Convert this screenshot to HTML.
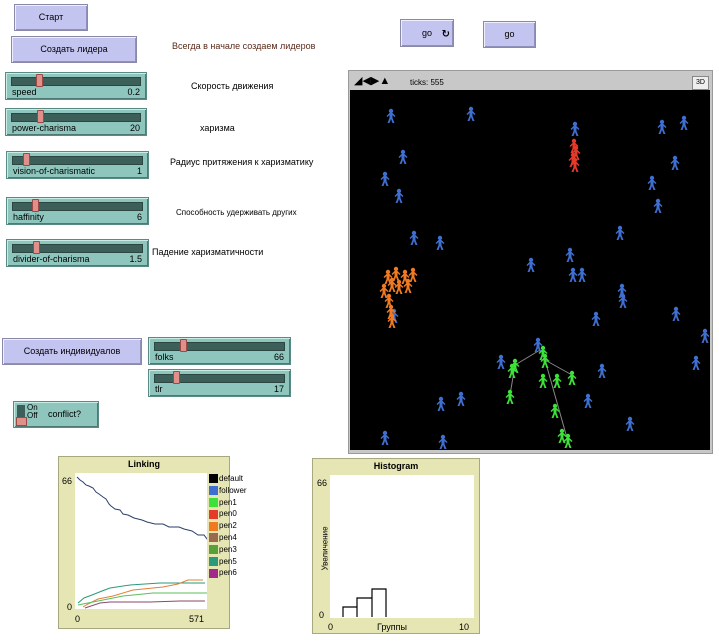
<!DOCTYPE html>
<html><head><meta charset="utf-8"><style>
body{margin:0;width:719px;height:642px;background:#fff;position:relative;overflow:hidden;font-family:"Liberation Sans","DejaVu Sans",sans-serif;font-size:9px;color:#000}
.a{position:absolute}
.btn{position:absolute;background:#c4c4f0;border:1px solid #8a8aa8;box-shadow:inset 1px 1px 0 #eef,inset -1px -1px 0 #9090b8;text-align:center;font-size:9px}
.sl{position:absolute;background:#8ec6be;border:1px solid #5a8a84;box-shadow:inset 1px 1px 0 #c8ece6,inset -1px -1px 0 #4f7a74}
.tr{position:absolute;left:5px;right:5px;top:4px;height:7px;background:#3d5f5a;border:1px solid #2c4642}
.kn{position:absolute;top:1px;width:5px;height:11px;background:#e08f8a;border:1px solid #9a4a46;border-radius:1px}
.ln{position:absolute;left:6px;bottom:2px;font-size:9px}
.vl{position:absolute;right:6px;bottom:2px;font-size:9px}
.lab{position:absolute;font-size:9px}
.plot{position:absolute;background:#e6e6b4;border:1px solid #a8a880}
.lg{white-space:nowrap;height:11.8px}
.lg span{display:inline-block;width:9px;height:9px;vertical-align:middle;margin-right:1px}
</style></head><body>
<div class="btn" style="left:14px;top:4px;width:72px;height:25px;line-height:25px">Старт</div>
<div class="btn" style="left:11px;top:36px;width:124px;height:25px;line-height:25px">Создать лидера</div>
<div class="lab" style="left:172px;top:41px;color:#5a2a1a">Всегда в начале создаем лидеров</div>

<div class="sl" style="left:5px;top:72px;width:140px;height:26px"><div class="tr"></div><div class="kn" style="left:30px"></div><span class="ln">speed</span><span class="vl">0.2</span></div>
<div class="lab" style="left:191px;top:81px">Скорость движения</div>
<div class="sl" style="left:5px;top:108px;width:140px;height:26px"><div class="tr"></div><div class="kn" style="left:31px"></div><span class="ln">power-charisma</span><span class="vl">20</span></div>
<div class="lab" style="left:200px;top:123px">харизма</div>
<div class="sl" style="left:6px;top:151px;width:141px;height:26px"><div class="tr"></div><div class="kn" style="left:16px"></div><span class="ln">vision-of-charismatic</span><span class="vl">1</span></div>
<div class="lab" style="left:170px;top:157px">Радиус притяжения к харизматику</div>
<div class="sl" style="left:6px;top:197px;width:141px;height:26px"><div class="tr"></div><div class="kn" style="left:25px"></div><span class="ln">haffinity</span><span class="vl">6</span></div>
<div class="lab" style="left:176px;top:208px;font-size:8px">Способность удерживать других</div>
<div class="sl" style="left:6px;top:239px;width:141px;height:26px"><div class="tr"></div><div class="kn" style="left:26px"></div><span class="ln">divider-of-charisma</span><span class="vl">1.5</span></div>
<div class="lab" style="left:152px;top:247px">Падение харизматичности</div>

<div class="btn" style="left:2px;top:338px;width:138px;height:25px;line-height:25px">Создать индивидуалов</div>
<div class="sl" style="left:148px;top:337px;width:141px;height:26px"><div class="tr"></div><div class="kn" style="left:31px"></div><span class="ln">folks</span><span class="vl">66</span></div>
<div class="sl" style="left:148px;top:369px;width:141px;height:26px"><div class="tr"></div><div class="kn" style="left:24px"></div><span class="ln">tlr</span><span class="vl">17</span></div>
<div class="sl" style="left:13px;top:401px;width:84px;height:25px">
<div class="a" style="left:3px;top:3px;width:8px;height:19px;background:#3d5f5a"></div>
<div class="a" style="left:2px;top:15px;width:9px;height:7px;background:#e08f8a;border:1px solid #9a4a46"></div>
<div class="a" style="left:13px;top:2px;font-size:8px;line-height:8px">On<br>Off</div>
<div class="a" style="left:34px;top:7px">conflict?</div></div>

<div class="btn" style="left:400px;top:19px;width:52px;height:26px;line-height:26px">go<span style="position:absolute;right:3px;top:2px;font-weight:bold;font-size:10px">&#8635;</span></div>
<div class="btn" style="left:483px;top:21px;width:51px;height:25px;line-height:25px">go</div>

<div class="a" style="left:348px;top:70px;width:363px;height:382px;background:#c8c8c8;border:1px solid #999"></div>
<div class="a" style="left:354px;top:76px;font-size:11px;line-height:11px;font-weight:bold">&#9698;&#9664;&#9654;&#9650;</div>
<div class="a" style="left:410px;top:78px;font-size:8px">ticks: 555</div>
<div class="a" style="left:692px;top:76px;width:15px;height:12px;background:#eee;border:1px solid #888;font-size:7px;text-align:center;line-height:12px">3D</div>
<svg class="a" style="left:350px;top:90px" width="360" height="360" viewBox="350 90 360 360">
<defs><g id="p"><circle cx="0" cy="-4" r="2.2"/><path d="M-1.5-2h3l3 3-1 1-2-2v3l2 5h-2l-1.5-4-1.5 4h-2l2-5v-3l-2 2-1-1z"/></g></defs>
<rect x="350" y="90" width="360" height="360" fill="#000"/>
<g stroke="#888" stroke-width="1"><line x1="515" y1="365" x2="540" y2="350"/><line x1="515" y1="365" x2="510" y2="395"/><line x1="545" y1="360" x2="572" y2="375"/><line x1="545" y1="360" x2="567" y2="438"/></g>
<g fill="#3f6fd0">
<use href="#p" x="391" y="115"/><use href="#p" x="471" y="113"/><use href="#p" x="575" y="128"/><use href="#p" x="662" y="126"/><use href="#p" x="684" y="122"/><use href="#p" x="403" y="156"/><use href="#p" x="385" y="178"/><use href="#p" x="652" y="182"/><use href="#p" x="399" y="195"/><use href="#p" x="675" y="162"/><use href="#p" x="658" y="205"/><use href="#p" x="414" y="237"/><use href="#p" x="440" y="242"/><use href="#p" x="620" y="232"/><use href="#p" x="570" y="254"/><use href="#p" x="531" y="264"/><use href="#p" x="573" y="274"/><use href="#p" x="582" y="274"/><use href="#p" x="622" y="290"/><use href="#p" x="623" y="300"/><use href="#p" x="596" y="318"/><use href="#p" x="676" y="313"/><use href="#p" x="705" y="335"/><use href="#p" x="696" y="362"/><use href="#p" x="501" y="361"/><use href="#p" x="602" y="370"/><use href="#p" x="588" y="400"/><use href="#p" x="461" y="398"/><use href="#p" x="441" y="403"/><use href="#p" x="630" y="423"/><use href="#p" x="385" y="437"/><use href="#p" x="443" y="441"/><use href="#p" x="538" y="344"/><use href="#p" x="394" y="315"/></g>
<g fill="#e53a2a"><use href="#p" x="574" y="145"/><use href="#p" x="576" y="152"/><use href="#p" x="573" y="159"/><use href="#p" x="575" y="164"/></g>
<g fill="#f07a22"><use href="#p" x="388" y="276"/><use href="#p" x="396" y="273"/><use href="#p" x="405" y="276"/><use href="#p" x="413" y="274"/><use href="#p" x="384" y="290"/><use href="#p" x="392" y="284"/><use href="#p" x="399" y="286"/><use href="#p" x="408" y="285"/><use href="#p" x="389" y="300"/><use href="#p" x="391" y="311"/><use href="#p" x="392" y="320"/></g>
<g fill="#3ee03a"><use href="#p" x="515" y="365"/><use href="#p" x="512" y="370"/><use href="#p" x="543" y="352"/><use href="#p" x="545" y="360"/><use href="#p" x="543" y="380"/><use href="#p" x="572" y="377"/><use href="#p" x="510" y="396"/><use href="#p" x="555" y="410"/><use href="#p" x="557" y="380"/><use href="#p" x="568" y="440"/><use href="#p" x="562" y="435"/></g>
</svg>

<div class="plot" style="left:58px;top:456px;width:170px;height:171px">
<div class="a" style="left:0;right:0;top:2px;text-align:center;font-weight:bold">Linking</div>
<div class="a" style="left:16px;top:16px;width:132px;height:136px;background:#fff"></div>
<div class="a" style="left:3px;top:19px">66</div><div class="a" style="left:8px;top:145px">0</div>
<div class="a" style="left:16px;top:157px">0</div><div class="a" style="left:130px;top:157px">571</div>
<svg class="a" style="left:16px;top:16px" width="132" height="136"><path d="M2 4 l3 3 3 2 3 3 3 1 4 2 3 4 3 2 4 3 3 2 3 5 2 2 4 3 5 1 3 4 5 1 6 3 8 2 5 2 8 2 8 0 6 3 10 0 5 2 8 2 6 4 6 0 3 4 10 0" fill="none" stroke="#2a3f6a"/>
<path d="M3 130 l6-5 8-3 10-4 8-3 20-3 30-2 45 0" fill="none" stroke="#2a9a7a"/>
<path d="M8 134 l5-3 10-5 15-3 20-6 30-3 15-3 10-4 15 0" fill="none" stroke="#e0803a"/>
<path d="M10 135 l15-5 10-1 40 0 30-1 25 0" fill="none" stroke="#8a4a6a"/>
<path d="M3 132 l10-2 15-3 20-4 30-3 55 0" fill="none" stroke="#5abf5a"/></svg>
<div class="a" style="left:150px;top:16px;width:20px;font-size:8px;line-height:11.8px">
<div class="lg"><span style="background:#000"></span>default</div>
<div class="lg"><span style="background:#3f6fd0"></span>follower</div>
<div class="lg"><span style="background:#3ee03a"></span>pen1</div>
<div class="lg"><span style="background:#e53a2a"></span>pen0</div>
<div class="lg"><span style="background:#f07a22"></span>pen2</div>
<div class="lg"><span style="background:#9a6a4a"></span>pen4</div>
<div class="lg"><span style="background:#5aa03a"></span>pen3</div>
<div class="lg"><span style="background:#2a9a7a"></span>pen5</div>
<div class="lg"><span style="background:#a02a8a"></span>pen6</div></div>
</div>

<div class="plot" style="left:312px;top:458px;width:166px;height:174px">
<div class="a" style="left:0;right:0;top:2px;text-align:center;font-weight:bold">Histogram</div>
<div class="a" style="left:17px;top:16px;width:144px;height:143px;background:#fff"></div>
<div class="a" style="left:4px;top:19px">66</div><div class="a" style="left:6px;top:151px">0</div>
<div class="a" style="left:15px;top:163px">0</div><div class="a" style="left:64px;top:163px">Группы</div><div class="a" style="left:146px;top:163px">10</div>
<div class="a" style="left:-10px;top:85px;transform:rotate(-90deg);font-size:8px">Увеличение</div>
<svg class="a" style="left:17px;top:16px" width="144" height="143"><path d="M13 142 v-10 h14 v10 M27 142 v-19 h15 v19 M42 142 v-28 h14 v28" fill="none" stroke="#000" stroke-width="1.2"/></svg>
</div>
</body></html>
